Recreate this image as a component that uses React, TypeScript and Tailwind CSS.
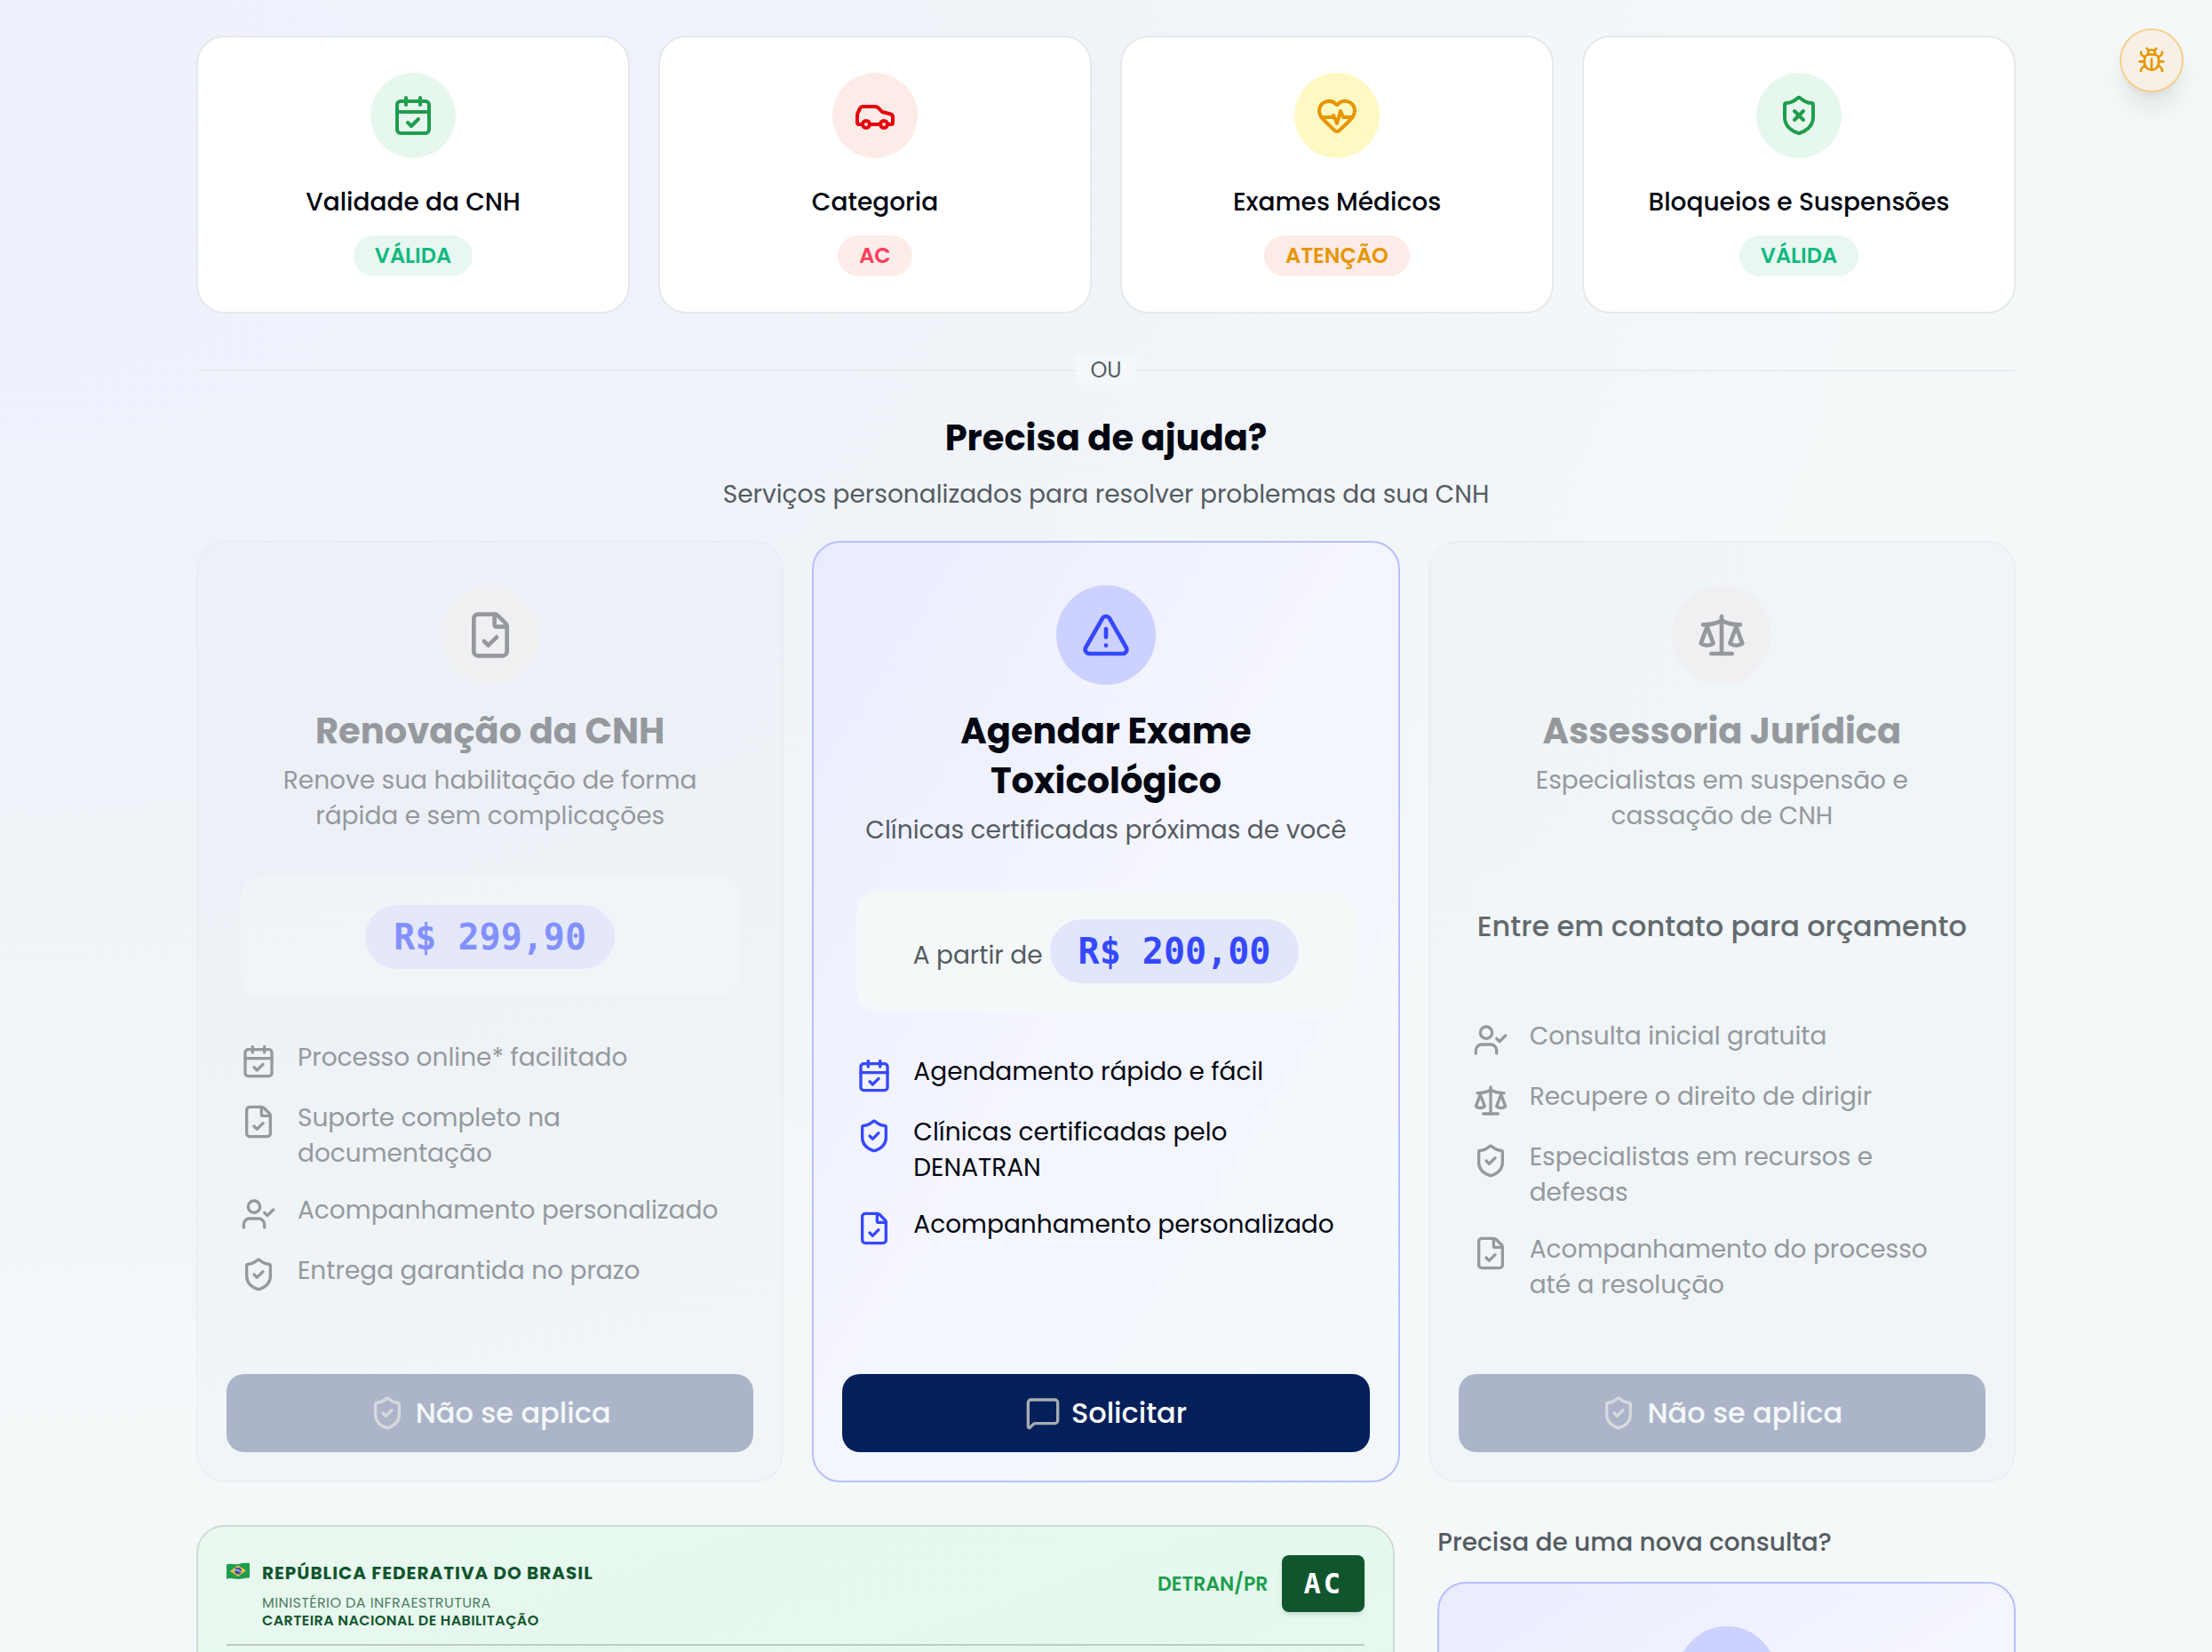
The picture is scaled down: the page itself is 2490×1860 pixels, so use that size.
import type { ReactNode } from "react";
import {
  Bug,
  CalendarCheck,
  Car,
  FileCheck,
  HeartPulse,
  MessageSquare,
  Scale,
  Search,
  ShieldCheck,
  ShieldX,
  TriangleAlert,
  UserCheck,
  type LucideIcon,
} from "lucide-react";
import clsx from "clsx";

const statusCards = [
  {
    title: "Validade da CNH",
    status: "VÁLIDA",
    icon: CalendarCheck,
    circle: "bg-[#e6f7ee] text-[#1f9d4d]",
    badge: "bg-[#e8f8f0] text-[#12b981]",
  },
  {
    title: "Categoria",
    status: "AC",
    icon: Car,
    circle: "bg-[#fcebe6] text-[#e7000b]",
    badge: "bg-[#fcedea] text-[#ff3b5c]",
  },
  {
    title: "Exames Médicos",
    status: "ATENÇÃO",
    icon: HeartPulse,
    circle: "bg-[#fef9c2] text-[#e69500]",
    badge: "bg-[#fcebe6] text-[#e69500]",
  },
  {
    title: "Bloqueios e Suspensões",
    status: "VÁLIDA",
    icon: ShieldX,
    circle: "bg-[#e6f7ee] text-[#1f9d4d]",
    badge: "bg-[#e8f8f0] text-[#12b981]",
  },
];

type Feature = { icon: LucideIcon; text: string };

type ServiceCardProps = {
  icon: LucideIcon;
  title: string;
  description: string;
  price: ReactNode;
  features: Feature[];
  active?: boolean;
};

const Price = ({ value, active }: { value: string; active?: boolean }) => (
  <span
    className={clsx(
      "rounded-full px-8 py-2 font-['DejaVu_Sans_Mono',monospace] text-[40px] leading-14 font-bold whitespace-nowrap",
      active ? "bg-[#e1e6fb] text-[#3548ff]" : "bg-[#e4e8fa] text-[#8390ff]"
    )}
  >
    {value}
  </span>
);

const ServiceCard = ({ icon: Icon, title, description, price, features, active }: ServiceCardProps) => (
  <article
    className={clsx(
      "flex flex-col rounded-[32px] border-2",
      active
        ? "border-[#b8bfff] bg-linear-to-br from-[#e9ecfd] via-[#f4f5ff] via-45% to-[#f4f8f9]"
        : "border-[#dfe4e6]/30 bg-[#dde5ec]/15"
    )}
  >
    <div className="flex flex-1 flex-col p-12">
      <div
        className={clsx(
          "mx-auto mb-6 flex size-28 items-center justify-center rounded-full",
          active ? "bg-[#ccd1ff] text-[#3548ff]" : "bg-[#f0f0f2] text-[#95999e]"
        )}
      >
        <Icon className="size-14" />
      </div>
      <h3
        className={clsx(
          "mb-2 text-center text-[40px] leading-14 font-bold",
          active ? "px-12 text-[#030712]" : "text-[#95999e]"
        )}
      >
        {title}
      </h3>
      <p
        className={clsx(
          "text-center text-[28px] leading-10",
          active ? "text-[#555b61]" : "px-8 text-[#95999e]"
        )}
      >
        {description}
      </p>

      <div
        className={clsx(
          "my-12 flex items-baseline justify-center gap-2 rounded-3xl py-8",
          active ? "bg-[#f4f8f9]" : "bg-[#f4f8fa]/50"
        )}
      >
        {price}
      </div>

      <ul className={clsx("space-y-6", active ? "text-[#030712]" : "text-[#95999e]")}>
        {features.map(({ icon: FeatureIcon, text }) => (
          <li key={text} className="flex items-start gap-6 text-[28px] leading-10">
            <FeatureIcon className={clsx("mt-1 size-10 shrink-0", active && "text-[#3548ff]")} />
            <span>{text}</span>
          </li>
        ))}
      </ul>
    </div>

    <div className="p-8">
      <button
        type="button"
        disabled={!active}
        className={clsx(
          "flex h-22 w-full items-center justify-center gap-3 rounded-[20px] text-[32px] font-medium",
          active ? "bg-[#04205a] text-white" : "bg-[#acb4ca] text-[#f4f8f9]"
        )}
      >
        {active ? (
          <MessageSquare className="size-10 text-[#a8acb0]" />
        ) : (
          <ShieldCheck className="size-10 text-[#d5dadd]" />
        )}
        {active ? "Solicitar" : "Não se aplica"}
      </button>
    </div>
  </article>
);

const BrazilFlag = () => (
  <svg viewBox="0 0 26 20" className="mt-1 h-5 w-[26px] shrink-0" aria-hidden="true">
    <path d="M0 2.500C4 .5 8.500 3 13 2s9-1.500 13-1v16.500c-4-.5-8.500 1.500-13 1.500s-9-2-13 0z" fill="#1f9d4d" />
    <path d="m13 3.500 9 5.800-9 6.700-9-6z" fill="#f5c344" />
    <circle cx="13" cy="9.800" r="4" fill="#41599b" />
    <path d="M9.300 8.800c2.600-.5 5 .3 7.200 2.500" stroke="#e8eef8" strokeWidth="1" fill="none" />
  </svg>
);

const App = () => {
  return (
    <div className="h-screen overflow-hidden bg-[#f4f8f9] bg-[radial-gradient(ellipse_at_0%_10%,#eeeffd_0%,#f0f4f9_32%,#f4f8f9_60%)] font-[Poppins,Inter,sans-serif] text-[#030712]">
      <button
        type="button"
        aria-label="Depurar"
        className="fixed top-8 right-8 flex size-18 items-center justify-center rounded-full border-2 border-[#f5d08c] bg-[#f7f0e6] text-[#e69500] shadow-[0_20px_30px_-6px_rgba(0,0,0,0.1),0_8px_12px_-8px_rgba(0,0,0,0.1)]"
      >
        <Bug className="size-8" />
      </button>

      <main className="mx-auto max-w-[2048px] pt-10">
        <section className="grid grid-cols-4 gap-8">
          {statusCards.map(({ title, status, icon: Icon, circle, badge }) => (
            <div
              key={title}
              className="flex flex-col items-center rounded-[32px] border-2 border-[#e7e8e9] bg-white p-10"
            >
              <div className={clsx("mb-7 flex size-24 items-center justify-center rounded-full", circle)}>
                <Icon className="size-12" />
              </div>
              <h3 className="mb-4 text-[28px] leading-[43px] font-medium">{title}</h3>
              <span className={clsx("rounded-full px-6 py-1 text-2xl leading-[38px] font-semibold", badge)}>
                {status}
              </span>
            </div>
          ))}
        </section>

        {/* Divisor */}
        <div className="mt-12 flex items-center">
          <hr className="flex-1 border-t-2 border-[#e9ecee]" />
          <span className="bg-[#f5f8fa] px-4 text-2xl leading-8 text-[#555b61]">OU</span>
          <hr className="flex-1 border-t-2 border-[#e9ecee]" />
        </div>

        <section className="mt-8">
          <h2 className="mb-4 text-center text-[40px] leading-14 font-bold">Precisa de ajuda?</h2>
          <p className="mb-8 text-center text-[28px] leading-10 text-[#555b61]">
            Serviços personalizados para resolver problemas da sua CNH
          </p>

          <div className="grid grid-cols-3 gap-8">
            <ServiceCard
              icon={FileCheck}
              title="Renovação da CNH"
              description="Renove sua habilitação de forma rápida e sem complicações"
              price={<Price value="R$ 299,90" />}
              features={[
                { icon: CalendarCheck, text: "Processo online* facilitado" },
                { icon: FileCheck, text: "Suporte completo na documentação" },
                { icon: UserCheck, text: "Acompanhamento personalizado" },
                { icon: ShieldCheck, text: "Entrega garantida no prazo" },
              ]}
            />
            <ServiceCard
              active
              icon={TriangleAlert}
              title="Agendar Exame Toxicológico"
              description="Clínicas certificadas próximas de você"
              price={
                <>
                  <span className="text-[28px] text-[#555b61]">A partir de</span>
                  <Price active value="R$ 200,00" />
                </>
              }
              features={[
                { icon: CalendarCheck, text: "Agendamento rápido e fácil" },
                { icon: ShieldCheck, text: "Clínicas certificadas pelo DENATRAN" },
                { icon: FileCheck, text: "Acompanhamento personalizado" },
              ]}
            />
            <ServiceCard
              icon={Scale}
              title="Assessoria Jurídica"
              description="Especialistas em suspensão e cassação de CNH"
              price={
                <span className="text-[32px] leading-12 font-medium whitespace-nowrap text-[#636a6d]">
                  Entre em contato para orçamento
                </span>
              }
              features={[
                { icon: UserCheck, text: "Consulta inicial gratuita" },
                { icon: Scale, text: "Recupere o direito de dirigir" },
                { icon: ShieldCheck, text: "Especialistas em recursos e defesas" },
                { icon: FileCheck, text: "Acompanhamento do processo até a resolução" },
              ]}
            />
          </div>
        </section>

        <section className="mt-12 grid grid-cols-3 gap-12">
          {/* Documento */}
          <div className="col-span-2 rounded-[32px] border-2 border-[#d0dcd6] bg-linear-to-br from-[#e9f8f0] via-[#e4f9ed] to-[#e9f8f0] p-8 pb-80">
            <header className="flex items-start justify-between border-b-2 border-[#bccbc5] pb-4">
              <div className="flex gap-3.5 pt-1">
                <BrazilFlag />
                <div className="text-[#11552d]">
                  <p className="mb-2 text-xl leading-8 font-bold tracking-wider">REPÚBLICA FEDERATIVA DO BRASIL</p>
                  <p className="text-base leading-5 tracking-wide text-[#4d7d62]">MINISTÉRIO DA INFRAESTRUTURA</p>
                  <p className="text-base leading-5 font-semibold tracking-wide">CARTEIRA NACIONAL DE HABILITAÇÃO</p>
                </div>
              </div>
              <div className="flex items-center gap-4">
                <span className="text-[22px] font-semibold text-[#1f9d4d]">DETRAN/PR</span>
                <span className="rounded-lg bg-[#11552d] px-6 py-3 font-['DejaVu_Sans_Mono',monospace] text-[32px] leading-10 font-bold tracking-widest text-white shadow-md">
                  AC
                </span>
              </div>
            </header>
          </div>

          <aside>
            <h3 className="mb-6 text-[28px] leading-10 font-medium text-[#555b61]">Precisa de uma nova consulta?</h3>
            <div className="rounded-[32px] border-2 border-[#b8bfff] bg-linear-to-br from-[#e9ecfd] via-[#f4f5ff] to-[#f4f8f9] p-12 pb-60">
              <div className="mx-auto flex size-28 items-center justify-center rounded-full bg-[#ccd1ff] text-[#3548ff]">
                <Search className="size-14" />
              </div>
            </div>
          </aside>
        </section>
      </main>
    </div>
  );
};

export default App;
